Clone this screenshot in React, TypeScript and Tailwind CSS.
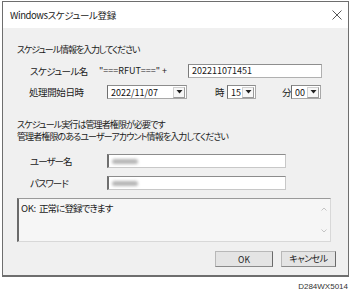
import React from "react";

const F = "[font-family:'Noto_Sans_CJK_JP','Noto_Sans',sans-serif] [font-feature-settings:'palt']";

function Arrow() {
  return (
    <svg width="7" height="4" viewBox="0 0 7 4">
      <path d="M0.5 0 L6.5 0 L3.5 3.5 Z" fill="#222" />
    </svg>
  );
}

function Combo({ w, value }: { w: string; value: string }) {
  return (
    <div className={`${w} h-[14px] flex items-center bg-white border border-[#a8a8a8] border-l-[#6f6f6f] border-t-[#8c8c8c]`}>
      <span className="flex-1 pl-[3px] text-[9px] leading-none text-[#111]">{value}</span>
      <div className="w-[12px] h-[11px] mr-[1px] flex items-center justify-center bg-[#f7f7f7] border border-[#d0d0d0] border-r-[#9a9a9a] border-b-[#9a9a9a]">
        <Arrow />
      </div>
    </div>
  );
}

function Blob() {
  return <div className="ml-[3px] w-[26px] h-[5px] bg-[#b5b5b5] blur-[1.5px] rounded-sm" />;
}

export default function App() {
  return (
    <div className={`w-[350px] h-[292px] bg-white relative ${F} text-[#1a1a1a]`}>
      <div className="ml-[2px] mt-[1px] w-[347px] h-[276px] border border-[#6e6e6e] border-b-2 flex flex-col bg-[#f0f0f0]">
        <div className="h-[26px] bg-white flex items-center justify-between pl-[7px] pr-[6px]">
          <span className="text-[9.5px] text-[#222] tracking-[-0.4px]">Windowsスケジュール登録</span>
          <svg width="10" height="10" viewBox="0 0 10 10">
            <path d="M0.5 0.5 L9.5 9.5 M9.5 0.5 L0.5 9.5" stroke="#444" strokeWidth="0.9" />
          </svg>
        </div>
        <div className="flex flex-col pl-[14px] pt-[16px] text-[9px]">
          <div className="h-[12px] leading-[12px] tracking-[-1.1px]">スケジュール情報を入力してください</div>
          <div className="mt-[8px] flex items-center h-[14px] pl-[13px]">
            <span className="w-[69px] text-[9.5px] tracking-[-0.6px]">スケジュール名</span>
            <span className="w-[89px]">"===RFUT===" +</span>
            <div className="w-[134px] h-[14px] bg-white border border-[#b0b0b0] border-l-[#7a7a7a] border-t-[#8e8e8e] flex items-center pl-[3px] text-[9px]">
              202211071451
            </div>
          </div>
          <div className="mt-[7px] flex items-center h-[14px] pl-[12px]">
            <span className="w-[78px] text-[9.5px] tracking-[-0.4px]">処理開始日時</span>
            <Combo w="w-[80px]" value="2022/11/07" />
            <span className="ml-[28px] w-[12px] text-[9.5px]">時</span>
            <Combo w="w-[29px]" value="15" />
            <span className="ml-[26px] w-[9px] text-[9.5px]">分</span>
            <Combo w="w-[30px]" value="00" />
          </div>
          <div className="mt-[20px] leading-[12px] tracking-[-0.9px]">
            <div>スケジュール実行は管理者権限が必要です</div>
            <div>管理者権限のあるユーザーアカウント情報を入力してください</div>
          </div>
          <div className="mt-[11px] flex items-center h-[14px] pl-[13px]">
            <span className="w-[77px] text-[9.5px] tracking-[-1px]">ユーザー名</span>
            <div className="w-[179px] h-[14px] bg-white border border-[#c8c8c8] border-l-[#6f6f6f] border-l-2 border-t-[#8c8c8c] flex items-center">
              <Blob />
            </div>
          </div>
          <div className="mt-[8px] flex items-center h-[14px] pl-[13px]">
            <span className="w-[77px] text-[9.5px] tracking-[-1px]">パスワード</span>
            <div className="w-[179px] h-[14px] bg-white border border-[#c8c8c8] border-l-[#6f6f6f] border-l-2 border-t-[#8c8c8c] flex items-center">
              <Blob />
            </div>
          </div>
          <div className="mt-[8px] w-[314px] h-[44px] bg-[#f6f6f6] border border-[#d8d8d8] border-l-[#6a6a6a] border-l-2 border-t-[#9a9a9a] flex">
            <div className="flex-1 pl-[2px] pt-[3px] text-[9.5px] leading-[12px]">
              <span className="tracking-[-0.3px] mr-[3px]">OK:</span>
              <span className="tracking-[-0.9px]">正常に登録できます</span>
            </div>
            <div className="w-[12px] flex flex-col items-center justify-between py-[8px]">
              <svg width="6" height="4" viewBox="0 0 6 4"><path d="M0.5 3.5 L3 1 L5.5 3.5" stroke="#c4c4c4" fill="none" /></svg>
              <svg width="6" height="4" viewBox="0 0 6 4"><path d="M0.5 0.5 L3 3 L5.5 0.5" stroke="#c4c4c4" fill="none" /></svg>
            </div>
          </div>
          <div className="mt-[9px] flex justify-end pr-[12px] gap-[8px]">
            <div className="w-[58px] h-[16px] bg-[#e4e4e4] border border-[#b8b8b8] border-r-[#6a6a6a] border-b-[#8a8a8a] flex items-center justify-center text-[8.5px]">OK</div>
            <div className="w-[55px] h-[16px] bg-[#e4e4e4] border border-[#b8b8b8] border-r-[#6a6a6a] border-b-[#8a8a8a] flex items-center justify-center text-[9px] tracking-[-0.5px]">キャンセル</div>
          </div>
        </div>
      </div>
      <div className="absolute right-[2px] top-[280px] text-[8px] leading-[12px] text-[#333] [font-family:'Liberation_Sans',sans-serif]">D284WX5014</div>
    </div>
  );
}
